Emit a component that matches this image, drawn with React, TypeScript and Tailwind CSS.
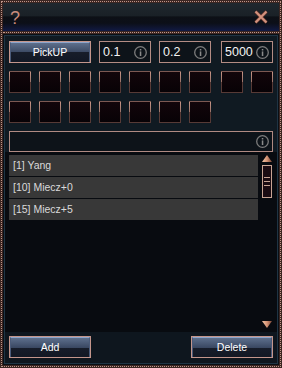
import React from "react";

const font = { fontFamily: '"Liberation Sans", Arial, sans-serif' };

function InfoIcon() {
  return (
    <svg width="13" height="13" viewBox="0 0 13 13" className="shrink-0">
      <circle cx="6.5" cy="6.5" r="5.8" fill="none" stroke="#7c7c7c" strokeWidth="1.3" />
      <rect x="5.8" y="3" width="1.5" height="1.5" fill="#8a8a8a" />
      <rect x="5.8" y="5.4" width="1.5" height="4.6" fill="#8a8a8a" />
    </svg>
  );
}

function Btn({ label, className = "" }: { label: string; className?: string }) {
  return (
    <div className={"w-[82px] h-[22px] border border-[#c4968c] " + className}>
      <div className="h-full border-t border-x border-t-[#8ea6cc] border-x-[#4a5a78] bg-[linear-gradient(to_bottom,#5d6f8c_0%,#3a4862_50%,#171d2a_50%,#121824_100%)] flex items-center justify-center text-[10.5px] text-white leading-none">
        {label}
      </div>
    </div>
  );
}

function ValBox({ value, className = "" }: { value: string; className?: string }) {
  return (
    <div className={"w-[52px] h-[22px] border border-[#b48c84] bg-[#0d1319] flex items-center justify-between pl-[3px] pr-[3px] " + className}>
      <span className="text-[12.5px] text-[#f2f2f2] leading-none">{value}</span>
      <InfoIcon />
    </div>
  );
}

function Slot({ className = "" }: { className?: string }) {
  return (
    <div className={"w-[22px] h-[22px] p-px bg-[linear-gradient(to_bottom,#7c5852_0px,#7c5852_1px,#c49486_1px,#9a7268_50%,#573a36_50%,#573a36_100%)] " + className}>
      <div className="w-full h-full bg-[linear-gradient(to_bottom,#12050a,#080206)]" />
    </div>
  );
}

function Arrow({ up }: { up: boolean }) {
  return (
    <svg width="10" height="7" viewBox="0 0 10 7">
      <defs>
        <linearGradient id={up ? "gu" : "gd"} x1="0" y1="0" x2="1" y2="0">
          <stop offset="0" stopColor="#f2c6a6" />
          <stop offset="0.5" stopColor="#d49476" />
          <stop offset="1" stopColor="#7a4434" />
        </linearGradient>
      </defs>
      {up ? (
        <polygon points="5,0 10,7 0,7" fill="url(#gu)" />
      ) : (
        <polygon points="0,0 10,0 5,7" fill="url(#gd)" />
      )}
    </svg>
  );
}

export default function App() {
  const items = ["[1] Yang", "[10] Miecz+0", "[15] Miecz+5"];
  return (
    <div style={font} className="w-[282px] h-[368px] bg-[#3b2622] p-px">
      <div className="h-full border border-dotted border-[#c0968a]">
        <div className="h-full bg-[#3b2622] p-px flex flex-col">
          {/* title bar */}
          <div className="h-[28px] shrink-0 bg-[linear-gradient(to_bottom,#1f272e_0%,#1a2127_45%,#0d1016_50%,#0c0f18_72%,#111a44_100%)] flex items-start justify-between px-[7px]">
            <span className="text-[18px] font-normal text-[#c98c7c] leading-none mt-[6px]">?</span>
            <svg width="14" height="14" viewBox="0 0 14 14" className="mt-[7px] mr-[4px]">
              <path d="M1.5 1.5 L12.5 12.5 M12.5 1.5 L1.5 12.5" stroke="#6a3a32" strokeWidth="3.4" />
              <path d="M1.5 1.5 L12.5 12.5 M12.5 1.5 L1.5 12.5" stroke="#d4947f" strokeWidth="2" />
            </svg>
          </div>
          {/* separator */}
          <div className="h-[3px] py-px shrink-0">
            <div className="border-t border-dotted border-[#c0968a]" />
          </div>
          {/* content */}
          <div className="flex-1 bg-[#0a0f14] p-px">
            <div className="h-full border border-[#1f3444] flex flex-col bg-[#101a22]">
              <div className="px-[4px] pt-[5px] flex flex-col">
                <div className="flex">
                  <Btn label="PickUP" />
                  <ValBox value="0.1" className="ml-[8px]" />
                  <ValBox value="0.2" className="ml-[8px]" />
                  <ValBox value="5000" className="ml-[10px]" />
                </div>
                <div className="flex gap-[8px] mt-[8px]">
                  {Array.from({ length: 7 }).map((_, i) => (
                    <Slot key={i} />
                  ))}
                  <Slot className="ml-[2px]" />
                  <Slot />
                </div>
                <div className="flex gap-[8px] mt-[8px]">
                  {Array.from({ length: 7 }).map((_, i) => (
                    <Slot key={i} />
                  ))}
                </div>
                <div className="mt-[8px] h-[21px] border border-[#b08a82] bg-[#0d1319] flex items-center justify-end pr-[3px]">
                  <InfoIcon />
                </div>
              </div>
              {/* list panel */}
              <div className="h-[180px] shrink-0 bg-[#080b10] px-[4px] pt-[3px] pb-[4px] flex">
                <div className="w-[249px] flex flex-col">
                  {items.map((t, i) => (
                    <div
                      key={t}
                      className={"h-[21px] bg-[#383838] flex items-center pl-[4px] text-[10.5px] text-[#dadada] leading-none " + (i > 0 ? "mt-px" : "")}
                    >
                      {t}
                    </div>
                  ))}
                </div>
                <div className="ml-[4px] w-[10px] flex flex-col items-center justify-between">
                  <div className="flex flex-col items-center">
                    <Arrow up />
                    <div className="mt-[3px] w-[10px] h-[33px] border border-[#c8a494] bg-[#1a0b12] flex flex-col items-center justify-center gap-[3px]">
                      <div className="w-[6px] h-px bg-[#c8a494]" />
                      <div className="w-[6px] h-px bg-[#c8a494]" />
                      <div className="w-[6px] h-px bg-[#c8a494]" />
                    </div>
                  </div>
                  <Arrow up={false} />
                </div>
              </div>
              {/* bottom buttons */}
              <div className="flex-1 bg-[#0e161e] px-[4px] pt-[4px] flex justify-between">
                <Btn label="Add" />
                <Btn label="Delete" />
              </div>
            </div>
          </div>
        </div>
      </div>
    </div>
  );
}
